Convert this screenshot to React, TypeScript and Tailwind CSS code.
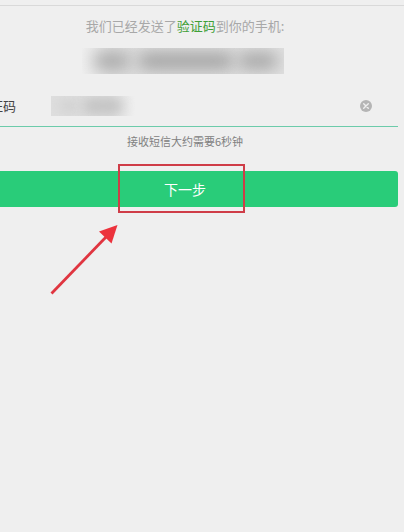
import { useState } from "react";

type BlobProps = {
  className: string;
};

const Blob = ({ className }: BlobProps) => (
  <span className={`shrink-0 rounded-full ${className}`} />
);

const MaskedPhone = () => (
  <div className="mr-[114px] ml-auto flex h-[26px] w-[202px] items-center overflow-hidden bg-linear-to-r from-[#efefef] via-[#dedede] via-15% to-[#e0e0e0]">
    <Blob className="ml-3 h-4 w-9 bg-[#a6a6a6] blur-[8px]" />
    <Blob className="ml-2 h-4 w-24 bg-[#a0a0a0] blur-[8px]" />
    <Blob className="ml-1 h-4 w-10 bg-[#a4a4a4] blur-[8px]" />
  </div>
);

const ClearIcon = () => (
  <svg viewBox="0 0 12 12" className="size-3" aria-hidden="true">
    <circle cx="6" cy="6" r="6" fill="#b5b5b5" />
    <path
      d="M3.7 3.7l4.6 4.6M8.3 3.7L3.7 8.3"
      stroke="#efefef"
      strokeWidth="1.4"
      strokeLinecap="round"
    />
  </svg>
);

const Arrow = () => (
  <svg
    viewBox="0 0 70 72"
    className="pointer-events-none absolute top-[53px] left-1/2 -ml-[135px] h-[72px] w-[70px]"
    aria-hidden="true"
  >
    <path d="M1.5 69.5L57 12" stroke="#e03540" strokeWidth="2.8" />
    <path d="M67.5 1L49 7.5L61.5 19.5Z" fill="#ec323c" />
  </svg>
);

const App = () => {
  const [code, setCode] = useState("");

  return (
    <main className="min-h-screen overflow-hidden bg-[#efefef] pt-[5px] font-['Noto_Sans_CJK_SC',sans-serif]">
      <div className="border-t border-[#d9d9d9]" />
      <form
        className="mr-1.5 -ml-7 pt-2.5"
        onSubmit={(e) => e.preventDefault()}
      >
        <p className="text-center text-[13px] leading-5 text-[#a8a8a8]">
          我们已经发送了
          <span className="text-[#3fa037]">验证码</span>
          到你的手机:
        </p>
        <div className="mt-3">
          <MaskedPhone />
        </div>

        <div className="relative mt-3 flex h-[41px] items-center border-b border-[#6ccbaa] pr-[26px] pl-[5px]">
          <label
            htmlFor="code"
            className="shrink-0 text-[13px] leading-5 text-[#444444]"
          >
            验证码
          </label>
          <input
            id="code"
            value={code}
            onChange={(e) => setCode(e.target.value)}
            className="ml-9 h-8 min-w-0 flex-1 bg-transparent text-[13px] outline-none"
          />
          <span className="pointer-events-none absolute left-[79px] flex h-5 w-[84px] items-center overflow-hidden bg-linear-to-r from-[#dedede] from-70% to-[#efefef]">
            <Blob className="ml-2 h-3 w-5 bg-[#d0d0d0] blur-[6px]" />
            <Blob className="ml-1 h-4 w-10 bg-[#c3c3c3] blur-[6px]" />
          </span>
          <button type="button" aria-label="清除" onClick={() => setCode("")}>
            <ClearIcon />
          </button>
        </div>

        <p className="mt-1 text-center text-[11px] leading-5 text-[#808080]">
          接收短信大约需要6秒钟
        </p>

        <div className="relative mt-5">
          <button
            type="submit"
            className="block h-9 w-full rounded-[3px] bg-[#29cc79] text-center text-sm text-white"
          >
            下一步
          </button>
          <div className="pointer-events-none absolute -top-[7px] -bottom-1.5 left-1/2 -ml-[67px] w-[127px] border-2 border-[#cf3d48]" />
          <Arrow />
        </div>
      </form>
    </main>
  );
};

export default App;
